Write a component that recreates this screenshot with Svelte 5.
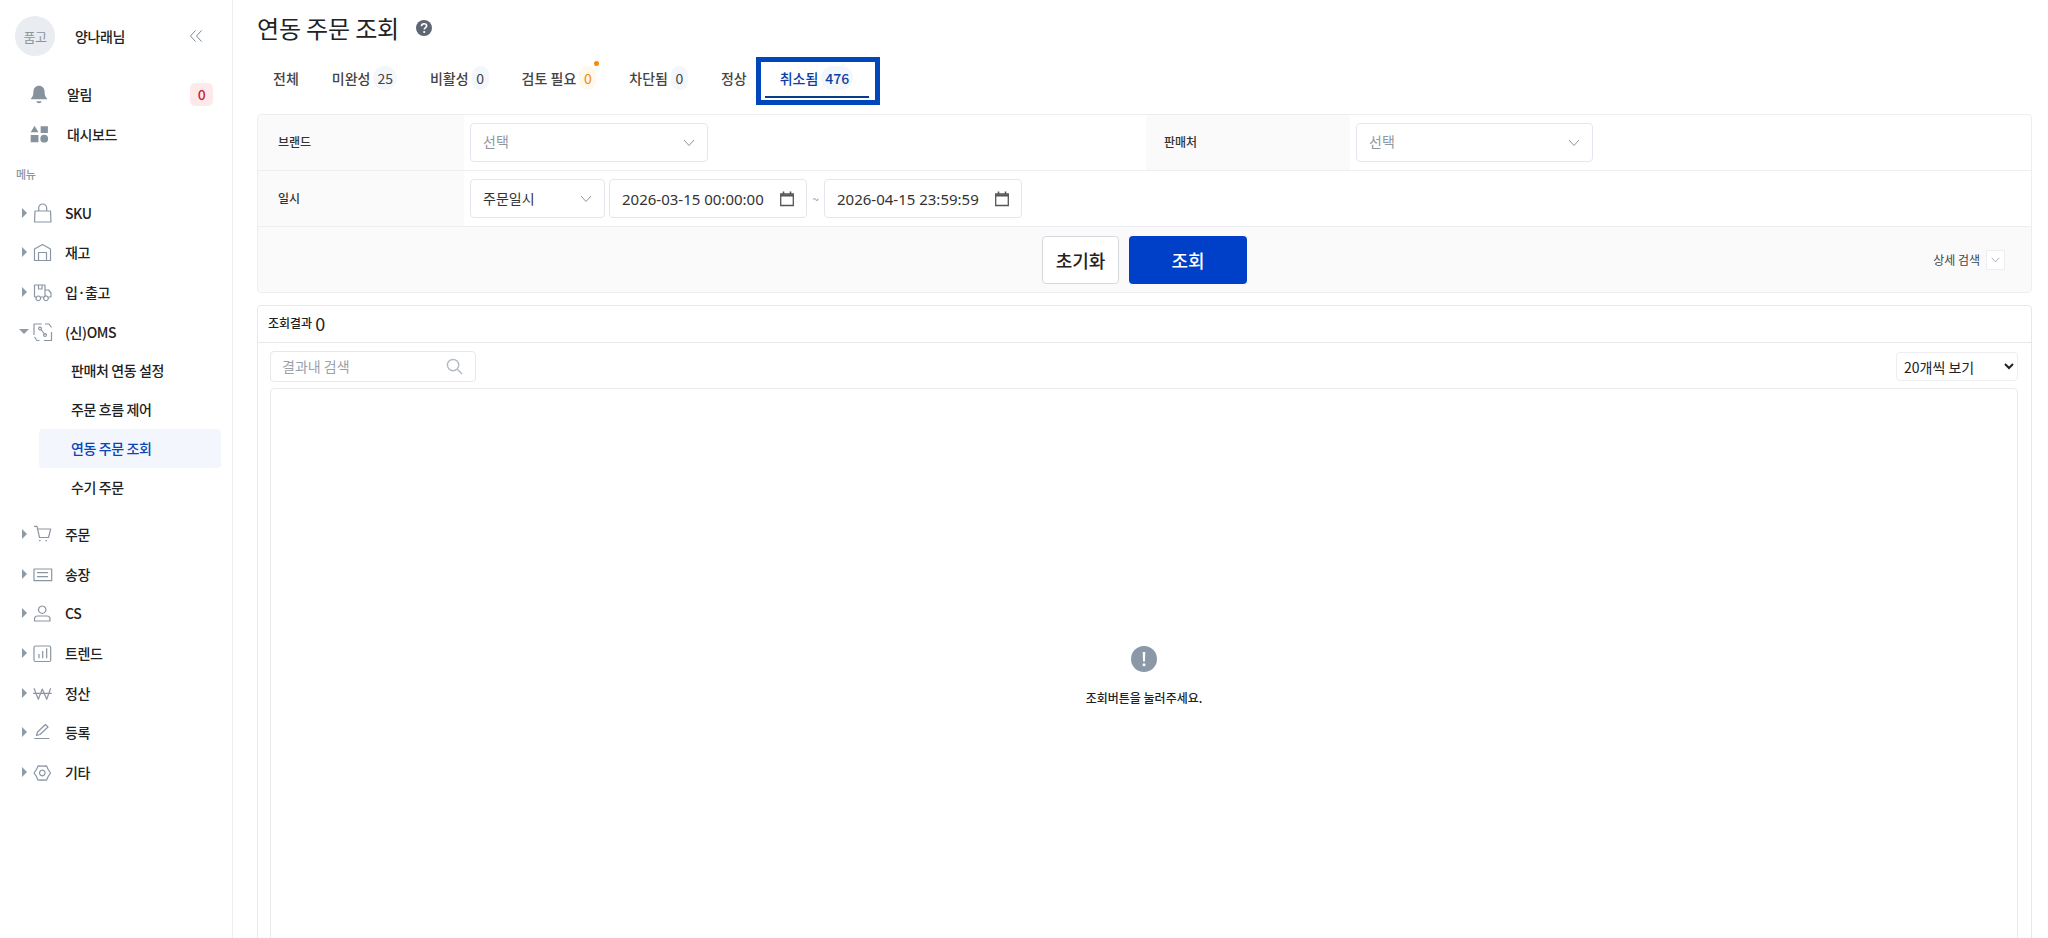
<script>
  const tabs = [
    { label: '전체' },
    { label: '미완성', count: '25' },
    { label: '비활성', count: '0' },
    { label: '검토 필요', count: '0', warn: true },
    { label: '차단됨', count: '0' },
    { label: '정상' },
    { label: '취소됨', count: '476', active: true }
  ];
  const before = [
    { label: 'SKU', icon: 'bag' },
    { label: '재고', icon: 'home' },
    { label: '입·출고', icon: 'truck' }
  ];
  const subs = ['판매처 연동 설정', '주문 흐름 제어', '연동 주문 조회', '수기 주문'];
  const after = [
    { label: '주문', icon: 'cart' },
    { label: '송장', icon: 'list' },
    { label: 'CS', icon: 'user' },
    { label: '트렌드', icon: 'chart' },
    { label: '정산', icon: 'won' },
    { label: '등록', icon: 'pen' },
    { label: '기타', icon: 'gear' }
  ];
  const icons = {
    bag: 'M2 8h15.500l.5 11H1.500zM5.700 8V5a4 4 0 0 1 8 0v3',
    home: 'M1.500 18.500V7l8-4.500 8 4.500v11.500zM5.500 18.500V10.500h8v8',
    truck: 'M1.500 15V3h10.500v12M12 8h3.500l2.500 3v4M5.500 3v4h3.500V3M1.500 15h1.500M7.500 15h3.500M15.500 15h2.500M5.300 14a2.300 2.300 0 1 0 .01 0M13 14a2.300 2.300 0 1 0 .01 0',
    oms: 'M8.700 2H1v11M18.500 10v8.500H11M12 2h4l2.500 3.500M1.500 15l2.500 3.500h2.500M7 5.200a1.400 1.400 0 1 0 .01 0M12 11.700a1.400 1.400 0 1 0 .01 0M8 7.500l3 4',
    cart: 'M1 2.300h3l2.500 11.200h9L17.700 5H4.500M6 16.700h1.500M12.500 16.700h1.500',
    list: 'M1 5h17.700v11.700H1zM4 8.700h11M4 12.700h11',
    user: 'M9.200 3a3.700 3.700 0 1 0 .01 0M1.500 18v-2c0-1.800 1.500-3 3-3h9.500c1.700 0 3 1.200 3 3v2z',
    chart: 'M2.500 3h13.700q1.500 0 1.500 1.500v12.500q0 1.500-1.500 1.500H2.500q-1.500 0-1.500-1.500V4.500q0-1.500 1.500-1.500zM6 15.300V11M9.700 15.300V8M13.700 15.300V5.300',
    won: 'M1 5.300l4.300 11 4-10.300 4.400 10.300 4-11M0 10.300h18.700',
    pen: 'M3.500 13.500l1-3.500 8-7.500 2.500 2.500-8 7.500zM1.300 16.500h15',
    gear: 'M17.600 11L15.200 7.600 13.450 3.800 9.300 4.200 5.150 3.800 3.400 7.600 1 11 3.400 14.400 5.150 18.200 9.300 17.800 13.450 18.200 15.200 14.400zM9.300 8.200a2.800 2.800 0 1 0 .01 0'
  };
</script>

{#snippet navIcon(name)}
  <svg class="nav-icon" viewBox="0 0 20 20" fill="none" stroke="currentColor" stroke-width="1.200" stroke-linejoin="round" aria-hidden="true"><path d={icons[name]} /></svg>
{/snippet}

{#snippet chevron()}
  <svg class="chev" viewBox="0 0 12 8" fill="none" stroke="currentColor" stroke-width="1" aria-hidden="true"><path d="M1 1l5 5.500L11 1" /></svg>
{/snippet}

{#snippet calendar()}
  <svg class="cal" viewBox="0 0 16 16" aria-hidden="true" fill="none" stroke="#555"><path stroke-width="1.300" d="M1.700 3h12.600v11.500H1.700z" /><path stroke-width="2.200" d="M1.700 4.500h12.600" /><path stroke-width="1.600" d="M4.500.5v3M11.500.5v3" /></svg>
{/snippet}

<div class="page">
  <aside class="side">
    <div class="profile">
      <div class="avatar">품고</div>
      <span class="who">양나래님</span>
      <svg class="collapse" viewBox="0 0 14 14" fill="none" stroke="#7f8a96" stroke-width="1" aria-hidden="true"><path d="M6.500 1.500L1.500 7l5 5.500M12.500 1.500L7.500 7l5 5.500" /></svg>
    </div>

    <div class="top-row">
      <svg class="top-icon" viewBox="0 0 18 18" fill="#87929f" aria-hidden="true"><path d="M9 1.500c-3 0-5 2.300-5 5.200 0 3-.8 4.800-2.200 6.300v.8h14.400V13C14.800 11.500 14 9.700 14 6.700c0-2.900-2-5.200-5-5.200zM6.500 15.500a2.600 2.600 0 0 0 5 0z" /></svg>
      <span class="top-label">알림</span>
      <span class="alert">0</span>
    </div>
    <div class="top-row">
      <svg class="top-icon" viewBox="0 0 18 18" fill="#87929f" aria-hidden="true"><path d="M5 1.500l3.500 6h-7zM10.500 2h6.500v6h-6.500zM1.500 10h7v6.500h-7z" /><circle cx="13.700" cy="13.200" r="3.500" /></svg>
      <span class="top-label">대시보드</span>
    </div>

    <div class="menu-title">메뉴</div>

    {#each before as item}
      <div class="nav-row"><span class="caret"></span>{@render navIcon(item.icon)}<span class="nav-label">{item.label}</span></div>
    {/each}
    <div class="nav-row"><span class="caret down"></span>{@render navIcon('oms')}<span class="nav-label">(신)OMS</span></div>
    <div class="subs">
      {#each subs as s, i}
        <div class="sub" class:on={i === 2}>{s}</div>
      {/each}
    </div>
    {#each after as item}
      <div class="nav-row"><span class="caret"></span>{@render navIcon(item.icon)}<span class="nav-label">{item.label}</span></div>
    {/each}
  </aside>

  <main class="main">
    <div class="title-row">
      <h1>연동 주문 조회</h1>
      <svg class="help" viewBox="0 0 16 16" aria-hidden="true"><circle cx="8" cy="8" r="8" fill="#5f6673" /><path d="M5.500 6.200c0-1.500 1.100-2.400 2.600-2.400s2.500.9 2.500 2.100c0 1.800-2.300 1.700-2.300 3.500" fill="none" stroke="#fff" stroke-width="1.600" /><circle cx="8.200" cy="12" r="1.100" fill="#fff" /></svg>
    </div>

    <div class="tabs">
      {#each tabs as t}
        <div class="tab" class:active={t.active}>
          <span>{t.label}</span>
          {#if t.count}<span class="pill" class:warn={t.warn}>{t.count}</span>{/if}
          {#if t.warn}<span class="dot"></span>{/if}
          {#if t.active}<span class="line"></span>{/if}
        </div>
      {/each}
    </div>

    <section class="filter">
      <div class="frow r1">
        <div class="lab">브랜드</div>
        <div class="val"><div class="box w238"><span class="ph">선택</span>{@render chevron()}</div></div>
        <div class="lab lab2">판매처</div>
        <div class="val"><div class="box w237"><span class="ph">선택</span>{@render chevron()}</div></div>
      </div>
      <div class="frow r2">
        <div class="lab">일시</div>
        <div class="val gap">
          <div class="box w135"><span class="kind">주문일시</span>{@render chevron()}</div>
          <div class="box date"><span>2026-03-15 00:00:00</span>{@render calendar()}</div>
          <span class="tilde">~</span>
          <div class="box date"><span>2026-04-15 23:59:59</span>{@render calendar()}</div>
        </div>
      </div>
      <div class="actions">
        <div></div>
        <div class="btns">
          <button class="reset">초기화</button>
          <button class="go">조회</button>
        </div>
        <div class="more"><span>상세 검색</span><span class="more-btn">{@render chevron()}</span></div>
      </div>
    </section>

    <section class="result">
      <header class="res-head"><span>조회결과</span><span class="num">0</span></header>
      <div class="tools">
        <div class="search">
          <span>결과내 검색</span>
          <svg viewBox="0 0 18 18" fill="none" stroke="#b4bac2" stroke-width="1.500" aria-hidden="true"><circle cx="7.500" cy="7.500" r="6" /><path d="M12 12l5 5" /></svg>
        </div>
        <select class="size"><option>20개씩 보기</option></select>
      </div>
      <div class="table">
        <svg class="warn-ic" viewBox="0 0 26 26" aria-hidden="true"><circle cx="13" cy="13" r="13" fill="#8a98a8" /><path d="M11.700 6h2.600l-.4 9.500h-1.800z" fill="#fff" /><circle cx="13" cy="18.800" r="1.500" fill="#fff" /></svg>
        <p>조회버튼을 눌러주세요.</p>
      </div>
    </section>
  </main>
</div>

<style>
  :global(body) { margin: 0; background: #fff; }
  .page {
    display: flex; height: 938px; overflow: hidden; color: #222;
    font-family: "Noto Sans CJK KR", "Noto Sans", sans-serif;
    font-size: 14px;
  }
  .side { width: 232px; flex: none; border-right: 1px solid #eceef1; box-sizing: content-box; letter-spacing: -0.4px; }
  .profile { display: flex; align-items: center; height: 40px; margin: 16px 0 18px 15px; }
  .avatar {
    width: 40px; height: 40px; border-radius: 50%; background: #e9ecf0; color: #8b95a0;
    font-size: 13px; display: flex; align-items: center; justify-content: center; flex: none;
  }
  .who { margin-left: 20px; font-size: 14px; font-weight: 500; }
  .collapse { width: 14px; height: 14px; margin-left: 64px; }
  .top-row { display: flex; align-items: center; height: 40px; padding-left: 29px; position: relative; }
  .top-icon { width: 20px; height: 20px; flex: none; }
  .top-label { margin-left: 18px; font-weight: 500; font-size: 14px; }
  .alert {
    margin-left: auto; margin-right: 19px; width: 23px; height: 23px; border-radius: 5px; background: #fde8ea;
    color: #c4273c; display: flex; align-items: center; justify-content: center; font-size: 14px; font-weight: 500;
  }
  .menu-title { font-size: 11px; color: #8a95a1; font-weight: 500; padding-left: 16px; height: 18px; line-height: 18px; margin: 11px 0 10px; }
  .nav-row { display: flex; align-items: center; height: 39.600px; padding-left: 22px; }
  .caret { width: 0; height: 0; border-style: solid; border-width: 5px 0 5px 5px; border-color: transparent transparent transparent #8f9aa5; margin-right: 6px; flex: none; }
  .caret.down { border-width: 5px 5px 0; border-color: #8f9aa5 transparent transparent; margin-left: -3px; margin-right: 4px; width: 0; }
  .nav-icon { width: 20px; height: 20px; color: #8b96a3; flex: none; }
  .nav-label { margin-left: 12px; font-weight: 500; }
  .subs { padding: 0 11px 7px 39px; }
  .sub { height: 39px; line-height: 39px; padding-left: 32px; font-weight: 500; border-radius: 4px; }
  .sub.on { background: #f3f6fd; color: #0a44b8; }

  .main { flex: 1; min-width: 0; padding: 0 16px 0 24px; }
  .title-row { display: flex; align-items: center; height: 56px; gap: 17px; }
  h1 { margin: 0; font-size: 24px; font-weight: 400; letter-spacing: -0.150px; line-height: 1; }
  .help { width: 16px; height: 16px; flex: none; }
  .tabs { display: flex; height: 48px; margin-bottom: 9px; margin-top: 1px; align-items: stretch; }
  .tab { position: relative; display: flex; align-items: center; padding: 0 17px 7px 16px; color: #444; font-weight: 500; gap: 3px; }
  .pill { padding: 0 4px; min-width: 17px; box-sizing: border-box; height: 24px; line-height: 24px; text-align: center; border-radius: 12px; background: #f3f6fb; font-weight: 400; }
  .pill.warn { color: #f08a00; background: #fff8ef; }
  .dot { position: absolute; width: 5px; height: 5px; border-radius: 50%; background: #f58a0b; right: 14px; top: 4px; }
  .tab.active { margin-left: -8px; padding: 0 27px 7px 24px; color: #0a3fa8; outline: 5px solid #0047bb; outline-offset: -5px; }
  .tab.active .pill { color: #0a3fa8; font-weight: 500; }
  .line { position: absolute; left: 9px; right: 11px; bottom: 7px; height: 2px; background: #0a3a8c; }

  .filter { border: 1px solid #eceef1; border-radius: 4px; overflow: hidden; margin-bottom: 12px; }
  .frow { display: grid; height: 56px; border-bottom: 1px solid #eceef1; box-sizing: border-box; }
  .r1 { grid-template-columns: 206px 682px 204px 1fr; }
  .r2 { grid-template-columns: 206px 1fr; }
  .lab { background: #fafafa; font-size: 12px; font-weight: 500; display: flex; align-items: center; padding: 0 0 2px 20px; color: #333; }
  .lab2 { padding-left: 18px; }
  .val { display: flex; align-items: center; padding-left: 6px; }
  .val.gap { gap: 4px; padding-left: 6px; }
  .box {
    height: 39px; box-sizing: border-box; border: 1px solid #e3e6ec; border-radius: 4px; background: #fff;
    display: flex; align-items: center; justify-content: space-between; padding: 0 12px; flex: none; font-size: 14px; color: #333;
  }
  .w238 { width: 238px; }
  .w237 { width: 237px; }
  .w135 { width: 135px; }
  .date { width: 198px; padding-right: 11px; font-family: "Noto Sans", sans-serif; font-size: 15px; }
  .ph { color: #8f979f; margin-top: -3px; }
  .kind { margin-top: -2px; }
  .chev { width: 12px; height: 8px; color: #8b939b; flex: none; }
  .cal { width: 16px; height: 16px; flex: none; }
  .tilde { color: #8b939b; font-size: 12px; width: 9px; text-align: center; }
  .actions { display: grid; grid-template-columns: 1fr auto 1fr; align-items: center; height: 65px; background: #fafafa; }
  .btns { display: flex; gap: 10px; }
  button { font-family: inherit; height: 48px; border-radius: 4px; font-size: 18px; font-weight: 500; cursor: pointer; }
  .reset { width: 77px; background: #fff; border: 1px solid #d5d8dd; color: #222; padding: 0; }
  .go { width: 118px; background: #0040c8; border: 0; color: #fff; }
  .more { justify-self: end; display: flex; align-items: center; gap: 6px; font-size: 12px; color: #444; padding-right: 26px; }
  .more-btn { width: 19px; height: 20px; border: 1px solid #eceef1; box-sizing: border-box; background: #fff; display: flex; align-items: center; justify-content: center; }
  .more-btn .chev { width: 9px; height: 6px; }

  .result { border: 1px solid #e6e8ec; border-radius: 4px 4px 0 0; }
  .res-head { display: flex; align-items: center; gap: 3px; height: 37px; padding: 0 0 3px 10px; box-sizing: border-box; border-bottom: 1px solid #e6e8ec; font-size: 12px; font-weight: 500; }
  .num { font-size: 18px; font-weight: 400; }
  .tools { display: flex; justify-content: space-between; align-items: center; padding: 8px 13px 6px 12px; }
  .search {
    width: 206px; height: 31px; box-sizing: border-box; border: 1px solid #e6e8ec; border-radius: 4px;
    display: flex; align-items: center; justify-content: space-between; padding: 0 12px 0 11px; color: #9aa1a9; font-size: 14px;
  }
  .search span { margin-top: -2px; }
  .search svg { width: 17px; height: 17px; }
  .size { width: 122px; height: 29px; border: 1px solid #eceef1; border-radius: 4px; background: #fff; font-family: inherit; font-size: 14px; color: #222; padding-left: 3px; }
  .table {
    margin: 0 13px 0 12px; height: 575px; border: 1px solid #e9ebef; border-radius: 4px;
    display: flex; flex-direction: column; align-items: center; justify-content: center; box-sizing: border-box;
  }
  .warn-ic { width: 26px; height: 26px; }
  .table p { margin: 17px 0 0; font-size: 12px; font-weight: 500; color: #222; }
</style>
